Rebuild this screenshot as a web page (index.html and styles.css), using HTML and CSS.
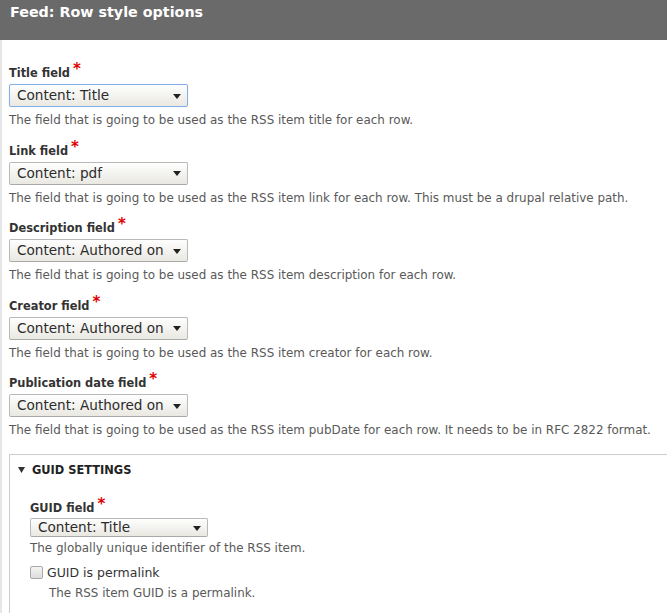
FILE: index.html
```html
<!DOCTYPE html>
<html lang="en">
<head>
<meta charset="utf-8">
<title>Feed: Row style options</title>
<link rel="stylesheet" href="styles.css">
</head>
<body>
<div class="dialog">
  <div class="titlebar">
    <h1 class="title">Feed: Row style options</h1>
  </div>
  <div class="content">
    <div class="field">
      <label class="label">Title field<span class="req">*</span></label>
      <div class="select is-focused"><select><option>Content: Title</option></select></div>
      <div class="desc">The field that is going to be used as the RSS item title for each row.</div>
    </div>
    <div class="field">
      <label class="label">Link field<span class="req">*</span></label>
      <div class="select"><select><option>Content: pdf</option></select></div>
      <div class="desc">The field that is going to be used as the RSS item link for each row. This must be a drupal relative path.</div>
    </div>
    <div class="field">
      <label class="label">Description field<span class="req">*</span></label>
      <div class="select"><select><option>Content: Authored on</option></select></div>
      <div class="desc">The field that is going to be used as the RSS item description for each row.</div>
    </div>
    <div class="field">
      <label class="label">Creator field<span class="req">*</span></label>
      <div class="select"><select><option>Content: Authored on</option></select></div>
      <div class="desc">The field that is going to be used as the RSS item creator for each row.</div>
    </div>
    <div class="field field-last">
      <label class="label">Publication date field<span class="req">*</span></label>
      <div class="select"><select><option>Content: Authored on</option></select></div>
      <div class="desc">The field that is going to be used as the RSS item pubDate for each row. It needs to be in RFC 2822 format.</div>
    </div>

    <details class="guid" open>
      <summary class="guid-summary">
        <svg class="guid-arrow" width="7" height="6" viewBox="0 0 7 6"><path d="M0 0H7L3.5 6Z" fill="#333"/></svg>
        <span>GUID SETTINGS</span>
      </summary>
      <div class="guid-body">
        <label class="label guid-label">GUID field<span class="req">*</span></label>
        <div class="select select-small"><select><option>Content: Title</option></select></div>
        <div class="desc guid-desc">The globally unique identifier of the RSS item.</div>
        <div class="check-row">
          <span class="checkbox"></span>
          <span class="check-label">GUID is permalink</span>
        </div>
        <div class="desc check-desc">The RSS item GUID is a permalink.</div>
      </div>
    </details>
  </div>
</div>
</body>
</html>
```

FILE: styles.css
```css
html, body {
  margin: 0;
  padding: 0;
  background: #fff;
  overflow: hidden;
}

body {
  font-family: "DejaVu Sans", Verdana, sans-serif;
  color: #333;
}

.titlebar {
  height: 40px;
  background: #6a6a6a;
  box-sizing: border-box;
  padding: 3px 0 0 10px;
}

.title {
  margin: 0;
  font-size: 14.3px;
  line-height: 18px;
  font-weight: bold;
  color: #fff;
}

.content {
  border-left: 2px solid #e6e6e6;
  padding: 24px 0 40px 7px;
}

.field {
  margin-bottom: 13.5px;
}

.field-last {
  margin-bottom: 16px;
}

.label {
  display: block;
  font-size: 11.4px;
  line-height: 18px;
  font-weight: bold;
  color: #333;
  margin-bottom: 2px;
}

.req {
  color: #e00000;
  font-size: 15px;
  margin-left: 3px;
  vertical-align: 3px;
  line-height: 0;
}

.select {
  position: relative;
  width: 179px;
  height: 23px;
}

.select select {
  -webkit-appearance: none;
  appearance: none;
  display: block;
  width: 100%;
  height: 100%;
  margin: 0;
  box-sizing: border-box;
  border: 1px solid #b9b9b9;
  border-bottom-color: #a9a9a9;
  border-radius: 2px;
  background: linear-gradient(#fefefe, #e9e8e1);
  font-family: "DejaVu Sans", Verdana, sans-serif;
  font-size: 13.6px;
  color: #2b2b2b;
  padding: 0 0 1px 7px;
  outline: none;
}

.select.is-focused select {
  border-color: #86aee6;
  box-shadow: 0 0 1px #a8c6ee;
}

.select::after {
  content: "";
  position: absolute;
  right: 7px;
  top: 50%;
  margin-top: -2px;
  border-left: 4px solid transparent;
  border-right: 4px solid transparent;
  border-top: 5px solid #222;
  pointer-events: none;
}

.select-small {
  width: 178px;
  height: 19px;
}

.desc {
  font-size: 11.95px;
  line-height: 16px;
  color: #595959;
  margin-top: 5px;
  white-space: nowrap;
}

.guid {
  border: 1px solid #cccccc;
  margin-right: -20px;
}

.guid-summary {
  list-style: none;
  display: flex;
  align-items: center;
  gap: 7px;
  padding: 6px 0 0 8px;
  height: 18px;
  font-size: 11.4px;
  font-weight: bold;
  color: #222;
  cursor: pointer;
}

.guid-summary::-webkit-details-marker {
  display: none;
}

.guid-arrow {
  display: block;
  flex: none;
}

.guid-body {
  padding: 19.5px 0 20px 20px;
}

.guid-label {
  margin-bottom: 1.5px;
}

.guid-desc {
  margin-top: 2.5px;
}

.check-row {
  display: flex;
  align-items: center;
  gap: 4px;
  height: 18px;
  margin-top: 8px;
}

.checkbox {
  display: block;
  width: 11px;
  height: 11px;
  border: 1px solid #a8a8a8;
  border-radius: 2px;
  background: linear-gradient(#f4f4f4, #dcdcdc);
}

.check-label {
  font-size: 12.5px;
  color: #333;
}

.check-desc {
  margin-top: 3px;
  padding-left: 19px;
}
```
